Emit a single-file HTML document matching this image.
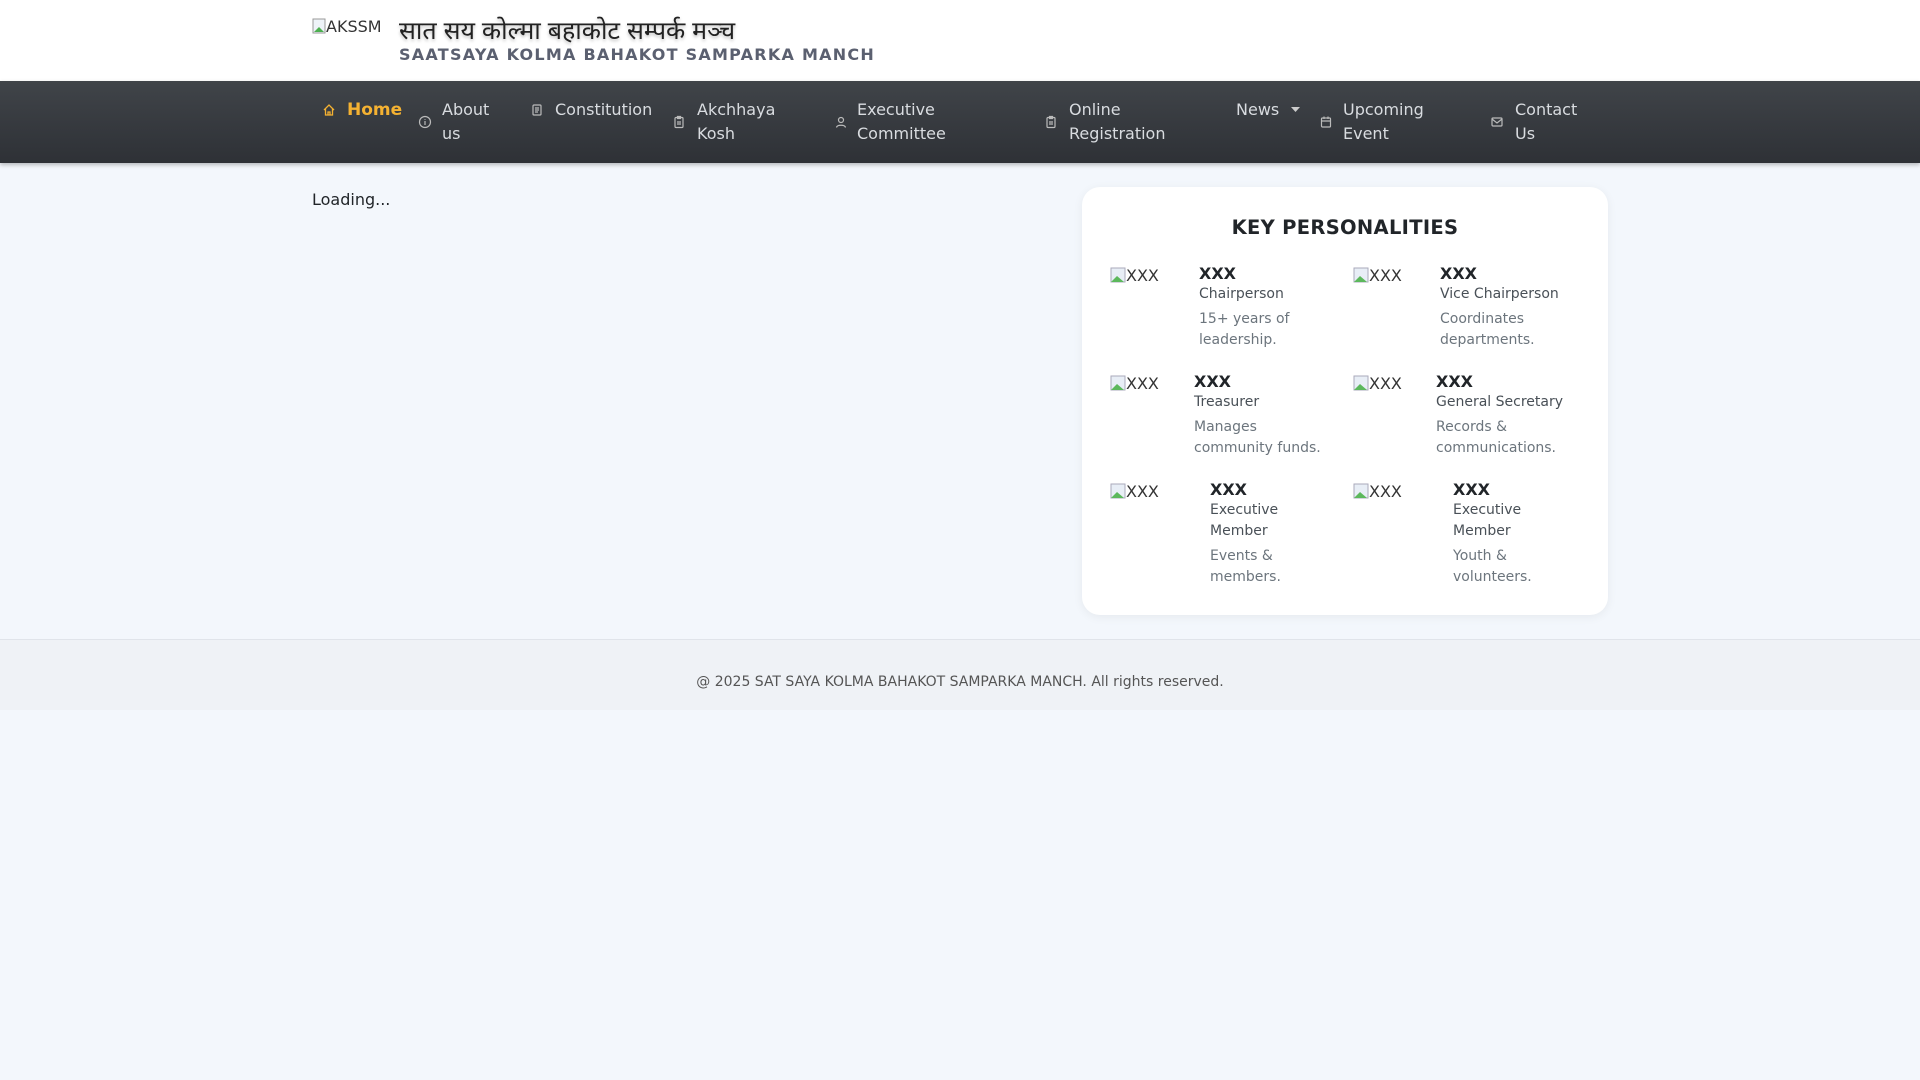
<!DOCTYPE html>
<html><head><meta charset="utf-8"><style>
*{margin:0;padding:0;box-sizing:border-box}
body{width:1920px;height:1080px;background:#f3f7fc;font-family:"DejaVu Sans","Liberation Sans",sans-serif;position:relative;overflow:hidden;color:#212529}
.hdr{position:absolute;left:0;top:0;width:1920px;height:81px;background:#fff}
.nav{position:absolute;left:0;top:81px;width:1920px;height:82px;background:linear-gradient(#404449,#2e3136);box-shadow:0 2px 4px rgba(0,0,0,.25)}
.a{position:absolute;font-size:16px;line-height:24px;color:#d9dce0}
.ic{position:absolute;width:14px;height:14px}
.t{position:absolute;white-space:nowrap}
.card{position:absolute;left:1082px;top:187px;width:526px;height:428px;background:#fff;border-radius:18px;box-shadow:0 2px 10px rgba(0,0,0,.06)}
.nm{font-weight:bold;font-size:16px;color:#212529;line-height:20px}
.rl{font-size:14px;color:#495057;line-height:21px}
.ds{font-size:14px;color:#6c757d;line-height:21px;margin-top:4px}
.im{position:absolute;font-size:16px;color:#333;white-space:nowrap}
.foot{position:absolute;left:0;top:639px;width:1920px;height:71px;background:#eff2f6;border-top:1px solid #e0e4ea}
</style></head><body>
<div class="hdr"></div>
<div class="t" style="left:312px;top:17px;font-size:16px;color:#333"><svg width="14" height="16" style="vertical-align:-2px"><rect x="1" y="1" width="12" height="14" fill="#eef3f8" stroke="#999"/><path d="M2 14 L7 9 L12 14Z" fill="#4caf50"/></svg>AKSSM</div>
<div class="t" style="left:399px;top:13px;font-size:25px;font-family:'Liberation Sans','Noto Sans CJK SC','DejaVu Sans',sans-serif;color:#222;text-shadow:0 2px 3px rgba(0,0,0,.25)">सात सय कोल्मा बहाकोट सम्पर्क मञ्च</div>
<div class="t" style="left:399px;top:45px;font-size:16px;font-weight:bold;letter-spacing:1.25px;color:#5b6070">SAATSAYA KOLMA BAHAKOT SAMPARKA MANCH</div>
<div class="nav"></div>
<svg class="ic" style="left:322px;top:103px" viewBox="0 0 14 14" fill="none" stroke="#f5b232" stroke-width="1.3"><path d="M2 7 L7 2 L12 7 M3.5 5.5 V12 H10.5 V5.5 M6 12 V9 H8 V12"/></svg>
<div class="a t" style="left:347px;top:98px;color:#f5b232;font-weight:bold;font-size:17px">Home</div>
<svg class="ic" style="left:418px;top:115px" viewBox="0 0 14 14" fill="none" stroke="#bbb" stroke-width="1.2"><circle cx="7" cy="7" r="5.5"/><path d="M7 6V10M7 4V4.8"/></svg>
<div class="a" style="left:442px;top:98px">About<br>us</div>
<svg class="ic" style="left:530px;top:103px" viewBox="0 0 14 14" fill="none" stroke="#bbb" stroke-width="1.2"><rect x="3" y="2" width="8" height="10" rx="1"/><path d="M5 5H9M5 7H9M5 9H8"/></svg>
<div class="a t" style="left:555px;top:98px">Constitution</div>
<svg class="ic" style="left:672px;top:115px" viewBox="0 0 14 14" fill="none" stroke="#bbb" stroke-width="1.2"><rect x="3" y="2.5" width="8" height="10" rx="1"/><path d="M5.5 1.5H8.5V3.5H5.5Z M5 7H9M5 9H9"/></svg>
<div class="a" style="left:697px;top:98px">Akchhaya<br>Kosh</div>
<svg class="ic" style="left:834px;top:115px" viewBox="0 0 14 14" fill="none" stroke="#bbb" stroke-width="1.2"><circle cx="7" cy="5" r="2.5"/><path d="M2.5 12.5C3 9.5 11 9.5 11.5 12.5"/></svg>
<div class="a" style="left:857px;top:98px">Executive<br>Committee</div>
<svg class="ic" style="left:1044px;top:115px" viewBox="0 0 14 14" fill="none" stroke="#bbb" stroke-width="1.2"><rect x="3" y="2.5" width="8" height="10" rx="1"/><path d="M5.5 1.5H8.5V3.5H5.5Z M5 7H9M5 9H9"/></svg>
<div class="a" style="left:1069px;top:98px">Online<br>Registration</div>
<div class="a t" style="left:1236px;top:98px">News</div>
<svg style="position:absolute;left:1291px;top:107px" width="10" height="6"><path d="M0 0H9L4.5 5Z" fill="#ccc"/></svg>
<svg class="ic" style="left:1319px;top:115px" viewBox="0 0 14 14" fill="none" stroke="#bbb" stroke-width="1.2"><rect x="2.5" y="3" width="9" height="9" rx="1"/><path d="M2.5 6H11.5M5 1.5V4M9 1.5V4"/></svg>
<div class="a" style="left:1343px;top:98px">Upcoming<br>Event</div>
<svg class="ic" style="left:1490px;top:115px" viewBox="0 0 14 14" fill="none" stroke="#bbb" stroke-width="1.2"><rect x="2" y="3" width="10" height="8" rx="1"/><path d="M2 4L7 8L12 4"/></svg>
<div class="a" style="left:1515px;top:98px">Contact<br>Us</div>

<div class="t" style="left:312px;top:190px;font-size:16px;color:#212529">Loading...</div>

<div class="card"></div>
<div class="t" style="left:1082px;width:526px;top:216px;text-align:center;font-weight:bold;font-size:19.5px;letter-spacing:.3px">KEY PERSONALITIES</div>

<div class="im" style="left:1110px;top:266px"><svg width="16" height="16" style="vertical-align:-2px"><rect x="1" y="1" width="14" height="14" fill="#e8eef6" stroke="#aab"/><path d="M1 15L7 9L14 15Z" fill="#5cb85c"/></svg>XXX</div>
<div style="position:absolute;left:1199px;top:264px"><div class="nm">XXX</div><div class="rl">Chairperson</div><div class="ds">15+ years of<br>leadership.</div></div>
<div class="im" style="left:1353px;top:266px"><svg width="16" height="16" style="vertical-align:-2px"><rect x="1" y="1" width="14" height="14" fill="#e8eef6" stroke="#aab"/><path d="M1 15L7 9L14 15Z" fill="#5cb85c"/></svg>XXX</div>
<div style="position:absolute;left:1440px;top:264px"><div class="nm">XXX</div><div class="rl">Vice Chairperson</div><div class="ds">Coordinates<br>departments.</div></div>
<div class="im" style="left:1110px;top:374px"><svg width="16" height="16" style="vertical-align:-2px"><rect x="1" y="1" width="14" height="14" fill="#e8eef6" stroke="#aab"/><path d="M1 15L7 9L14 15Z" fill="#5cb85c"/></svg>XXX</div>
<div style="position:absolute;left:1194px;top:372px"><div class="nm">XXX</div><div class="rl">Treasurer</div><div class="ds">Manages<br>community funds.</div></div>
<div class="im" style="left:1353px;top:374px"><svg width="16" height="16" style="vertical-align:-2px"><rect x="1" y="1" width="14" height="14" fill="#e8eef6" stroke="#aab"/><path d="M1 15L7 9L14 15Z" fill="#5cb85c"/></svg>XXX</div>
<div style="position:absolute;left:1436px;top:372px"><div class="nm">XXX</div><div class="rl">General Secretary</div><div class="ds">Records &amp;<br>communications.</div></div>
<div class="im" style="left:1110px;top:482px"><svg width="16" height="16" style="vertical-align:-2px"><rect x="1" y="1" width="14" height="14" fill="#e8eef6" stroke="#aab"/><path d="M1 15L7 9L14 15Z" fill="#5cb85c"/></svg>XXX</div>
<div style="position:absolute;left:1210px;top:480px"><div class="nm">XXX</div><div class="rl">Executive<br>Member</div><div class="ds">Events &amp;<br>members.</div></div>
<div class="im" style="left:1353px;top:482px"><svg width="16" height="16" style="vertical-align:-2px"><rect x="1" y="1" width="14" height="14" fill="#e8eef6" stroke="#aab"/><path d="M1 15L7 9L14 15Z" fill="#5cb85c"/></svg>XXX</div>
<div style="position:absolute;left:1453px;top:480px"><div class="nm">XXX</div><div class="rl">Executive<br>Member</div><div class="ds">Youth &amp;<br>volunteers.</div></div>

<div class="foot"></div>
<div class="t" style="left:0;width:1920px;top:674px;text-align:center;font-size:14px;color:#555">@ 2025 SAT SAYA KOLMA BAHAKOT SAMPARKA MANCH. All rights reserved.</div>
</body></html>
